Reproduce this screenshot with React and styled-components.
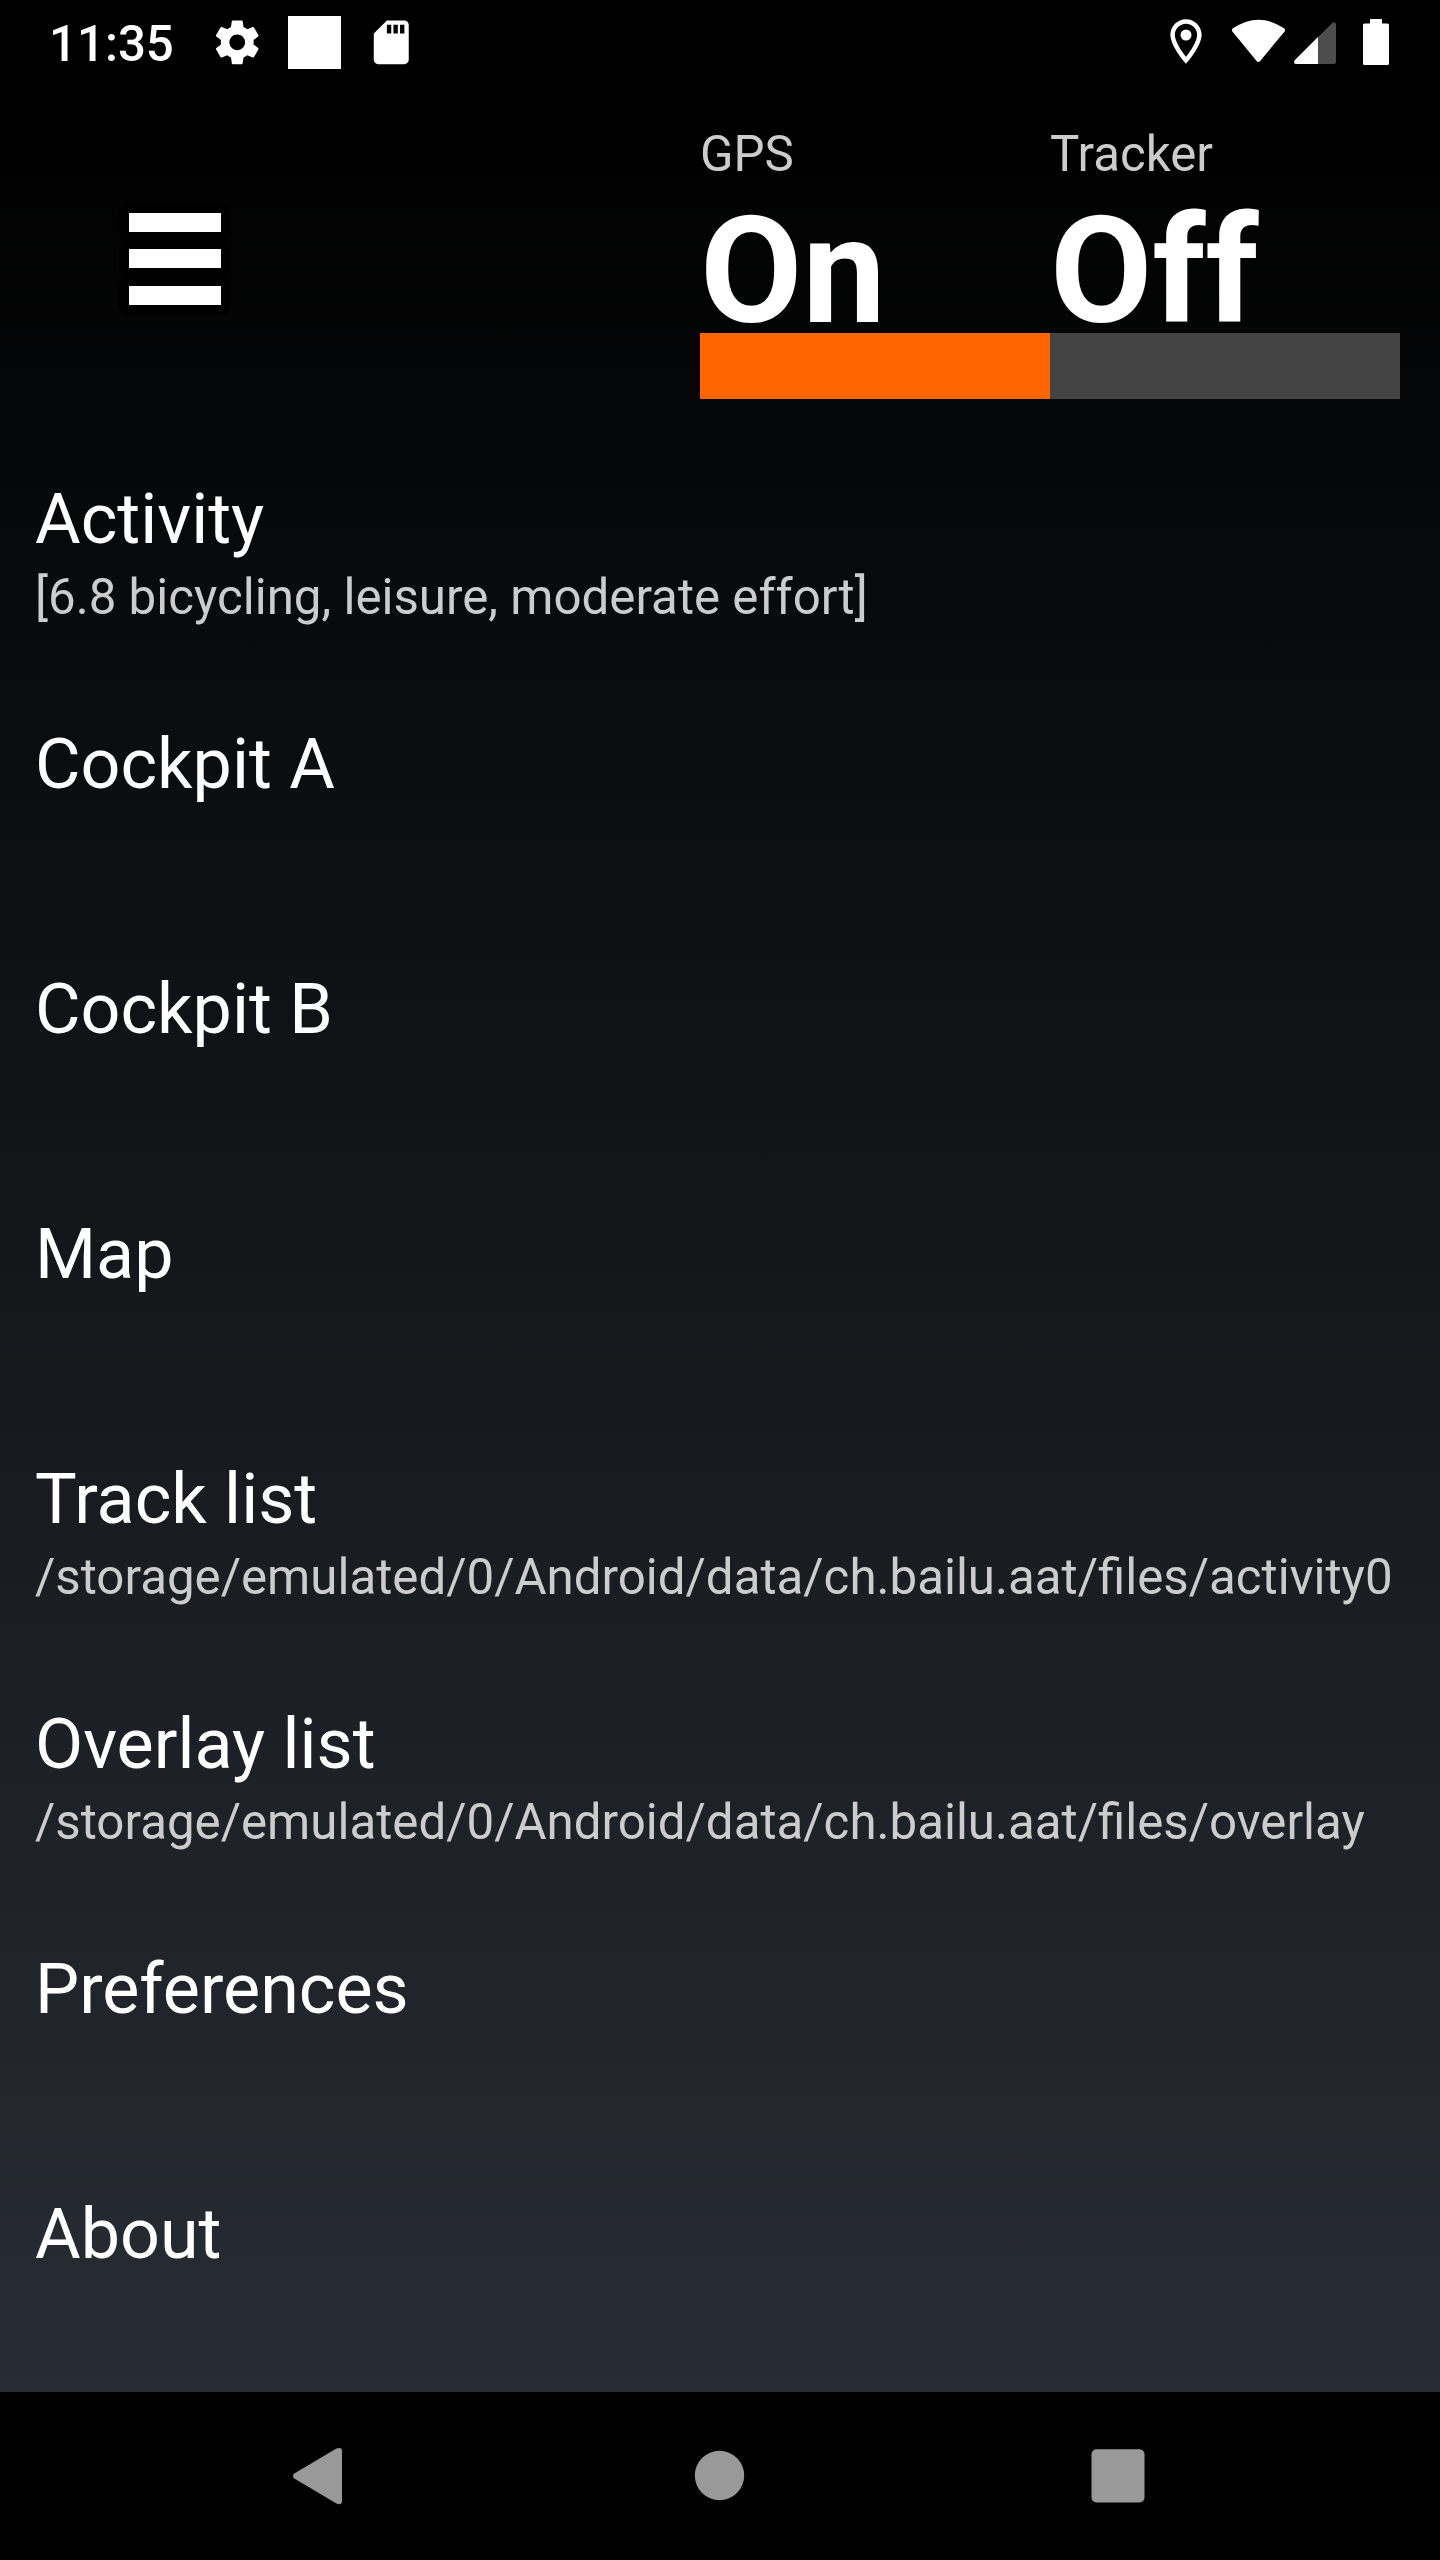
import React from "react";
import styled, { createGlobalStyle } from "styled-components";

const GlobalStyle = createGlobalStyle`
  html, body { margin: 0; padding: 0; background: #000; }
  * { box-sizing: border-box; }
`;

const Screen = styled.div`
  width: 1440px;
  height: 2560px;
  display: flex;
  flex-direction: column;
  font-family: Roboto, "Noto Sans", sans-serif;
  color: #fff;
  overflow: hidden;
`;

const AppArea = styled.div`
  height: 2392px;
  display: flex;
  flex-direction: column;
  background: linear-gradient(to bottom, #000 84px, #282c34 100%);
`;

const StatusBar = styled.header`
  height: 84px;
  flex: none;
  display: flex;
  align-items: center;
  justify-content: space-between;
  padding: 0 47px 0 49px;
`;

const StatusGroup = styled.div`
  display: flex;
  align-items: center;
  height: 84px;
`;

const Clock = styled.span`
  width: 162px;
  font-size: 49.2px;
  font-weight: 500;
  line-height: 58px;
  margin-top: 4px;
`;

const Notifications = styled.div`
  display: flex;
  gap: 24px;
`;

const NotificationIcon = styled.svg`
  display: block;
  width: 52.5px;
  height: 52.5px;
`;

const NotificationBlock = styled.div`
  width: 53px;
  height: 53px;
  background: #fff;
`;

const SystemIcons = styled.svg`
  display: block;
  width: 230px;
  height: 60px;
`;

const TopBar = styled.section`
  height: 350px;
  flex: none;
  display: flex;
  padding: 28px 40px 0 0;
`;

const MenuButton = styled.button`
  width: 350px;
  height: 294px;
  padding: 90.7px 0 0;
  border: 0;
  background: none;
  display: flex;
  flex-direction: column;
  align-items: center;
`;

const MenuBar = styled.span`
  width: 112.5px;
  height: 39px;
  margin-bottom: -2.3px;
  border: 10px solid #000;
  border-radius: 10px;
  background: #fff;
  background-clip: padding-box;
`;

const Indicators = styled.div`
  display: flex;
  margin-left: auto;
`;

const Indicator = styled.div`
  width: 350px;
  display: flex;
  flex-direction: column;
`;

const IndicatorLabel = styled.span`
  height: 74px;
  padding-top: 13px;
  font-size: 49.2px;
  line-height: 58px;
  color: #ccc;
`;

const IndicatorValue = styled.span`
  height: 147px;
  font-size: 148.5px;
  font-weight: 700;
  line-height: 171px;
`;

const IndicatorBar = styled.div`
  height: 66px;
  background: ${(p) => (p.$active ? "#ff6600" : "#444")};
`;

const Menu = styled.ul`
  list-style: none;
  margin: 0;
  padding: 39px 0 0 35px;
`;

const MenuItem = styled.li`
  height: 245px;
  display: flex;
  flex-direction: column;
`;

const Title = styled.span`
  font-size: 70px;
  line-height: 93px;
`;

const Subtitle = styled.span`
  margin-top: -1px;
  font-size: 49.24px;
  line-height: 65px;
  color: #ccc;
  white-space: nowrap;
`;

const NavBar = styled.nav`
  height: 168px;
  display: flex;
  justify-content: center;
  align-items: center;
  gap: 329px;
`;

const NavIcon = styled.svg`
  display: block;
  width: 70px;
  height: 70px;
  fill: #999;
`;

const items = [
  ["Activity", "[6.8 bicycling, leisure, moderate effort]"],
  ["Cockpit A"],
  ["Cockpit B"],
  ["Map"],
  ["Track list", "/storage/emulated/0/Android/data/ch.bailu.aat/files/activity0"],
  ["Overlay list", "/storage/emulated/0/Android/data/ch.bailu.aat/files/overlay"],
  ["Preferences"],
  ["About"],
];

const indicators = [
  { label: "GPS", value: "On", active: true },
  { label: "Tracker", value: "Off", active: false },
];

export default function App() {
  return (
    <Screen>
      <GlobalStyle />
      <AppArea>
        <StatusBar>
          <StatusGroup>
            <Clock>11:35</Clock>
            <Notifications>
              <NotificationIcon viewBox="0 0 24 24" fill="#fff">
                <path d="M19.43 12.98c.04-.32.07-.64.07-.98s-.03-.66-.07-.98l2.11-1.65c.19-.15.24-.42.12-.64l-2-3.46c-.12-.22-.39-.3-.61-.22l-2.49 1c-.52-.4-1.08-.73-1.69-.98l-.38-2.65C14.46 2.18 14.25 2 14 2h-4c-.25 0-.46.18-.49.42l-.38 2.65c-.61.25-1.17.59-1.69.98l-2.49-1c-.23-.09-.49 0-.61.22l-2 3.46c-.13.22-.07.49.12.64l2.11 1.65c-.04.32-.07.65-.07.98s.03.66.07.98l-2.11 1.65c-.19.15-.24.42-.12.64l2 3.46c.12.22.39.3.61.22l2.49-1c.52.4 1.08.73 1.69.98l.38 2.65c.03.24.24.42.49.42h4c.25 0 .46-.18.49-.42l.38-2.65c.61-.25 1.17-.59 1.69-.98l2.49 1c.23.09.49 0 .61-.22l2-3.46c.12-.22.07-.49-.12-.64l-2.11-1.65zM12 15.6c-1.98 0-3.6-1.62-3.6-3.6s1.62-3.6 3.6-3.6 3.6 1.62 3.6 3.6-1.62 3.6-3.6 3.6z" />
              </NotificationIcon>
              <NotificationBlock />
              <NotificationIcon viewBox="0 0 24 24" fill="#fff">
                <path d="M18 2h-8L4.02 8 4 20c0 1.1.9 2 2 2h12c1.1 0 2-.9 2-2V4c0-1.1-.9-2-2-2zm-6 6h-2V4h2v4zm3 0h-2V4h2v4zm3 0h-2V4h2v4z" />
              </NotificationIcon>
            </Notifications>
          </StatusGroup>
          <SystemIcons viewBox="1163 12 230 60" fill="#fff">
            <path
              transform="translate(1159.2 14.7) scale(2.233)"
              d="M12 2C8.13 2 5 5.13 5 9c0 5.25 7 13 7 13s7-7.75 7-13c0-3.87-3.13-7-7-7zM7 9c0-2.76 2.24-5 5-5s5 2.24 5 5c0 2.88-2.88 7.19-5 9.88C9.92 16.21 7 11.85 7 9z"
            />
            <circle cx="1186" cy="35" r="5.5" />
            <path d="M1232.6 28.6Q1258.5 10.8 1284.4 28.6Q1285.6 30 1284.6 31.4L1260.2 61Q1258.4 63 1256.6 61L1232.4 31.4Q1231.4 30 1232.6 28.6Z" />
            <path
              fill="#4d4d4d"
              d="M1296 64Q1294 64 1294 61.8L1295 60L1332.5 22.8Q1336 21 1336 25V62Q1336 64 1334 64Z"
            />
            <path d="M1296 64Q1294 64 1294 61.8L1295 60L1318 37V64Z" />
            <path d="M1370 19H1382V23.4H1387.5Q1389 23.4 1389 25V63.4Q1389 65 1387.4 65H1364.6Q1363 65 1363 63.4V25Q1363 23.4 1364.6 23.4H1370Z" />
          </SystemIcons>
        </StatusBar>
        <TopBar>
          <MenuButton aria-label="Menu">
            <MenuBar />
            <MenuBar />
            <MenuBar />
          </MenuButton>
          <Indicators>
            {indicators.map((i) => (
              <Indicator key={i.label}>
                <IndicatorLabel>{i.label}</IndicatorLabel>
                <IndicatorValue>{i.value}</IndicatorValue>
                <IndicatorBar $active={i.active} />
              </Indicator>
            ))}
          </Indicators>
        </TopBar>
        <Menu>
          {items.map(([title, sub]) => (
            <MenuItem key={title}>
              <Title>{title}</Title>
              {sub && <Subtitle>{sub}</Subtitle>}
            </MenuItem>
          ))}
        </Menu>
      </AppArea>
      <NavBar>
        <NavIcon viewBox="286 2441 70 70">
          <path d="M294.3 2473.6L336.5 2448.600Q342 2446.500 342 2451V2501Q342 2505.500 336.500 2503.600L294.300 2478.600Q291.700 2476 294.300 2473.600Z" />
        </NavIcon>
        <NavIcon viewBox="685 2441 70 70">
          <circle cx="719.5" cy="2475.500" r="24.700" />
        </NavIcon>
        <NavIcon viewBox="1084 2441 70 70">
          <rect x="1091.500" y="2449.300" width="53" height="53.200" rx="5" />
        </NavIcon>
      </NavBar>
    </Screen>
  );
}
